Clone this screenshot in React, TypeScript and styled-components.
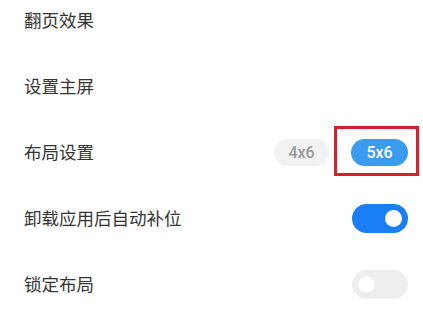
import React from "react";
import styled, { createGlobalStyle } from "styled-components";

const Global = createGlobalStyle`
  html, body { margin: 0; padding: 0; background: #ffffff; }
  body { width: 423px; height: 330px; overflow: hidden; font-family: "Noto Sans CJK SC", "Noto Sans", sans-serif; }
`;

const List = styled.div`
  display: flex;
  flex-direction: column;
  margin-top: -13px;
`;

const Row = styled.div`
  height: 66px;
  display: flex;
  align-items: center;
  justify-content: space-between;
  padding: 0 15px 0 24px;
  box-sizing: border-box;
`;

const Label = styled.span`
  font-size: 17.5px;
  color: #343434;
  line-height: 1;
`;

const Segments = styled.div`
  display: flex;
  align-items: center;
  gap: 22px;
`;

const Pill = styled.div<{ $active?: boolean }>`
  position: relative;
  width: ${(p) => (p.$active ? 57 : 55)}px;
  height: 27px;
  border-radius: 14px;
  display: flex;
  align-items: center;
  justify-content: center;
  font-family: Roboto, "Noto Sans", sans-serif;
  font-size: 16px;
  font-weight: 500;
  background: ${(p) => (p.$active ? "#3a9cf0" : "#f2f2f2")};
  color: ${(p) => (p.$active ? "#ffffff" : "#9a9a9a")};
`;

const Highlight = styled.span`
  position: absolute;
  left: -17px;
  top: -13px;
  width: 85px;
  height: 50px;
  border: 3px solid #d2212f;
  box-sizing: border-box;
  pointer-events: none;
`;

const Toggle = styled.div<{ $on?: boolean }>`
  width: 56px;
  height: 29px;
  border-radius: 15px;
  background: ${(p) => (p.$on ? "#1a7ff4" : "#eeeeee")};
  display: flex;
  align-items: center;
  justify-content: ${(p) => (p.$on ? "flex-end" : "flex-start")};
  padding: 0 6px;
  box-sizing: border-box;
`;

const Knob = styled.div<{ $on?: boolean }>`
  width: 17px;
  height: 17px;
  border-radius: 50%;
  background: #ffffff;
  box-shadow: ${(p) => (p.$on ? "none" : "0 0 1px rgba(0,0,0,0.12)")};
`;

export default function App() {
  return (
    <>
      <Global />
      <List>
        <Row>
          <Label>翻页效果</Label>
        </Row>
        <Row>
          <Label>设置主屏</Label>
        </Row>
        <Row>
          <Label>布局设置</Label>
          <Segments>
            <Pill>4x6</Pill>
            <Pill $active>
              5x6
              <Highlight />
            </Pill>
          </Segments>
        </Row>
        <Row>
          <Label>卸载应用后自动补位</Label>
          <Toggle $on>
            <Knob $on />
          </Toggle>
        </Row>
        <Row>
          <Label>锁定布局</Label>
          <Toggle>
            <Knob />
          </Toggle>
        </Row>
      </List>
    </>
  );
}
